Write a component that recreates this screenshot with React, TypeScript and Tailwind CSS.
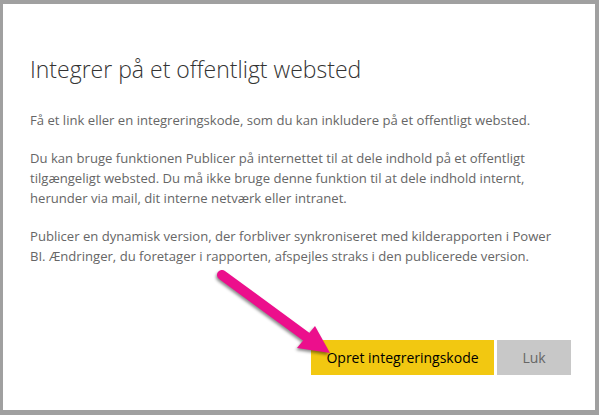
export default function App() {
  return (
    <div className="w-[599px] h-[415px] bg-[#a0a0a0] pt-[4px] pl-[3px] pr-[4px] pb-[5px]">
      <div className="relative h-full bg-white pl-[27px] pr-[20px] font-['Open_Sans',sans-serif]">
        {/* Header */}
        <h1 className="pt-[50px] text-[23px] leading-[30px] font-light text-[#333333]">
          Integrer på et offentligt websted
        </h1>

        {/* Body */}
        <div className="mt-[26px] space-y-[18px] text-[13.1px] leading-[20px] text-[#666666]">
          <p>Få et link eller en integreringskode, som du kan inkludere på et offentligt websted.</p>
          <p>
            Du kan bruge funktionen Publicer på internettet til at dele indhold på et offentligt
            <br />
            tilgængeligt websted. Du må ikke bruge denne funktion til at dele indhold internt,
            <br />
            herunder via mail, dit interne netværk eller intranet.
          </p>
          <p>
            Publicer en dynamisk version, der forbliver synkroniseret med kilderapporten i Power
            <br />
            BI. Ændringer, du foretager i rapporten, afspejles straks i den publicerede version.
          </p>
        </div>

        {/* Actions */}
        <div className="absolute left-0 right-0 top-[336px] flex justify-end gap-[3px] pr-[24px]">
          <button className="w-[183px] h-[35px] bg-[#f2c811] text-[14px] text-black">
            Opret integreringskode
          </button>
          <button className="w-[74px] h-[35px] bg-[#c8c8c8] text-[14px] text-[#666666]">
            Luk
          </button>
        </div>

        {/* Callout arrow */}
        <svg
          className="absolute left-0 top-0 pointer-events-none"
          width="592"
          height="406"
          viewBox="0 0 592 406"
          style={{ filter: 'drop-shadow(-1px 2px 1.5px rgba(0,0,0,0.45))' }}
        >
          <line x1="219" y1="271" x2="305" y2="334" stroke="#ec0f8c" strokeWidth="10" strokeLinecap="round" />
          <polygon points="294,344 312,322 327,349" fill="#ec0f8c" />
        </svg>
      </div>
    </div>
  )
}
